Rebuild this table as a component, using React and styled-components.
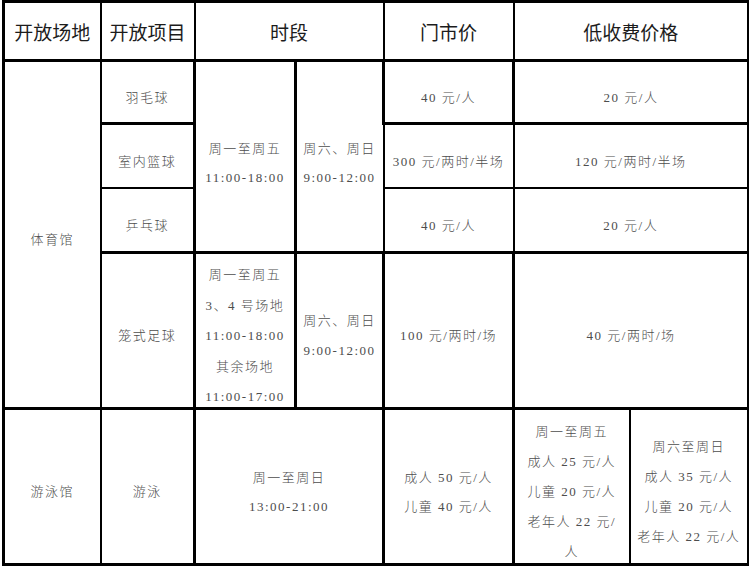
import React from "react";
import styled, { createGlobalStyle } from "styled-components";

const Global = createGlobalStyle`
  html, body { margin: 0; padding: 0; background: #fff; }
  body { font-family: "Liberation Serif", "Noto Sans CJK SC", serif; }
`;

const Table = styled.table`
  border-collapse: collapse;
  table-layout: fixed;
  width: 745px;
  margin: 0 0 0 2px;
  border: 3px solid #000;
`;

const Row = styled.tr`
  height: ${(p) => p.$h}px;
`;

const Head = styled.th`
  border: 2px solid #000;
  border-bottom-width: 3px;
  padding: 0;
  font-family: "Noto Sans CJK SC", sans-serif;
  font-weight: 400;
  font-size: 19px;
  color: #1c1c1c;
  text-align: center;
  vertical-align: middle;
`;

const Cell = styled.td`
  border: 2px solid #000;
  border-left-width: ${(p) => (p.$heavyLeft ? 3 : 2)}px;
  border-top-width: ${(p) => (p.$thinTop ? 1 : p.$heavyTop ? 3 : 2)}px;
  padding: 0;
  text-align: center;
  vertical-align: middle;
  font-family: "Liberation Serif", "Noto Sans CJK SC", serif;
  font-weight: 300;
  font-size: 13px;
  letter-spacing: 1.5px;
  color: #4d4d4d;
`;

const Lines = styled.div`
  margin: 6px 0 -6px;
  line-height: ${(p) => p.$lh || 30.5}px;
  white-space: nowrap;
`;

const Line = styled.div``;

function Text({ lines, lh }) {
  return (
    <Lines $lh={lh}>
      {lines.map((l, i) => (
        <Line key={i}>{l}</Line>
      ))}
    </Lines>
  );
}

export default function App() {
  return (
    <>
      <Global />
      <Table>
        <colgroup>
          <col style={{ width: 97 }} />
          <col style={{ width: 94 }} />
          <col style={{ width: 101 }} />
          <col style={{ width: 88 }} />
          <col style={{ width: 130 }} />
          <col style={{ width: 116 }} />
          <col style={{ width: 119 }} />
        </colgroup>
        <thead>
          <Row $h={59}>
            <Head>开放场地</Head>
            <Head>开放项目</Head>
            <Head colSpan={2}>时段</Head>
            <Head>门市价</Head>
            <Head colSpan={2}>低收费价格</Head>
          </Row>
        </thead>
        <tbody>
          <Row $h={63}>
            <Cell rowSpan={4}>
              <Text lines={["体育馆"]} />
            </Cell>
            <Cell>
              <Text lines={["羽毛球"]} />
            </Cell>
            <Cell rowSpan={3} $heavyLeft>
              <Text lines={["周一至周五", "11:00-18:00"]} lh={29} />
            </Cell>
            <Cell rowSpan={3} $heavyLeft>
              <Text lines={["周六、周日", "9:00-12:00"]} lh={29} />
            </Cell>
            <Cell $heavyLeft>
              <Text lines={["40 元/人"]} />
            </Cell>
            <Cell colSpan={2} $heavyLeft>
              <Text lines={["20 元/人"]} />
            </Cell>
          </Row>
          <Row $h={64}>
            <Cell $heavyTop>
              <Text lines={["室内篮球"]} />
            </Cell>
            <Cell $heavyTop>
              <Text lines={["300 元/两时/半场"]} />
            </Cell>
            <Cell colSpan={2} $heavyTop>
              <Text lines={["120 元/两时/半场"]} />
            </Cell>
          </Row>
          <Row $h={65}>
            <Cell $thinTop>
              <Text lines={["乒乓球"]} />
            </Cell>
            <Cell $thinTop>
              <Text lines={["40 元/人"]} />
            </Cell>
            <Cell colSpan={2} $thinTop>
              <Text lines={["20 元/人"]} />
            </Cell>
          </Row>
          <Row $h={154}>
            <Cell $heavyTop>
              <Text lines={["笼式足球"]} />
            </Cell>
            <Cell $heavyTop $heavyLeft>
              <Text
                lines={[
                  "周一至周五",
                  "3、4 号场地",
                  "11:00-18:00",
                  "其余场地",
                  "11:00-17:00",
                ]}
              />
            </Cell>
            <Cell $heavyTop $heavyLeft>
              <Text lines={["周六、周日", "9:00-12:00"]} />
            </Cell>
            <Cell $heavyTop $heavyLeft>
              <Text lines={["100 元/两时/场"]} />
            </Cell>
            <Cell colSpan={2} $heavyTop $heavyLeft>
              <Text lines={["40 元/两时/场"]} />
            </Cell>
          </Row>
          <Row $h={156}>
            <Cell $heavyTop>
              <Text lines={["游泳馆"]} />
            </Cell>
            <Cell $heavyTop>
              <Text lines={["游泳"]} />
            </Cell>
            <Cell colSpan={2} $heavyTop $heavyLeft>
              <Text lines={["周一至周日", "13:00-21:00"]} lh={29} />
            </Cell>
            <Cell $heavyTop $heavyLeft>
              <Text lines={["成人 50 元/人", "儿童 40 元/人"]} lh={29} />
            </Cell>
            <Cell $heavyTop $heavyLeft>
              <Text
                lines={[
                  "周一至周五",
                  "成人 25 元/人",
                  "儿童 20 元/人",
                  "老年人 22 元/",
                  "人",
                ]}
                lh={30}
              />
            </Cell>
            <Cell $heavyTop>
              <Text
                lines={[
                  "周六至周日",
                  "成人 35 元/人",
                  "儿童 20 元/人",
                  "老年人 22 元/人",
                ]}
                lh={30}
              />
            </Cell>
          </Row>
        </tbody>
      </Table>
    </>
  );
}
